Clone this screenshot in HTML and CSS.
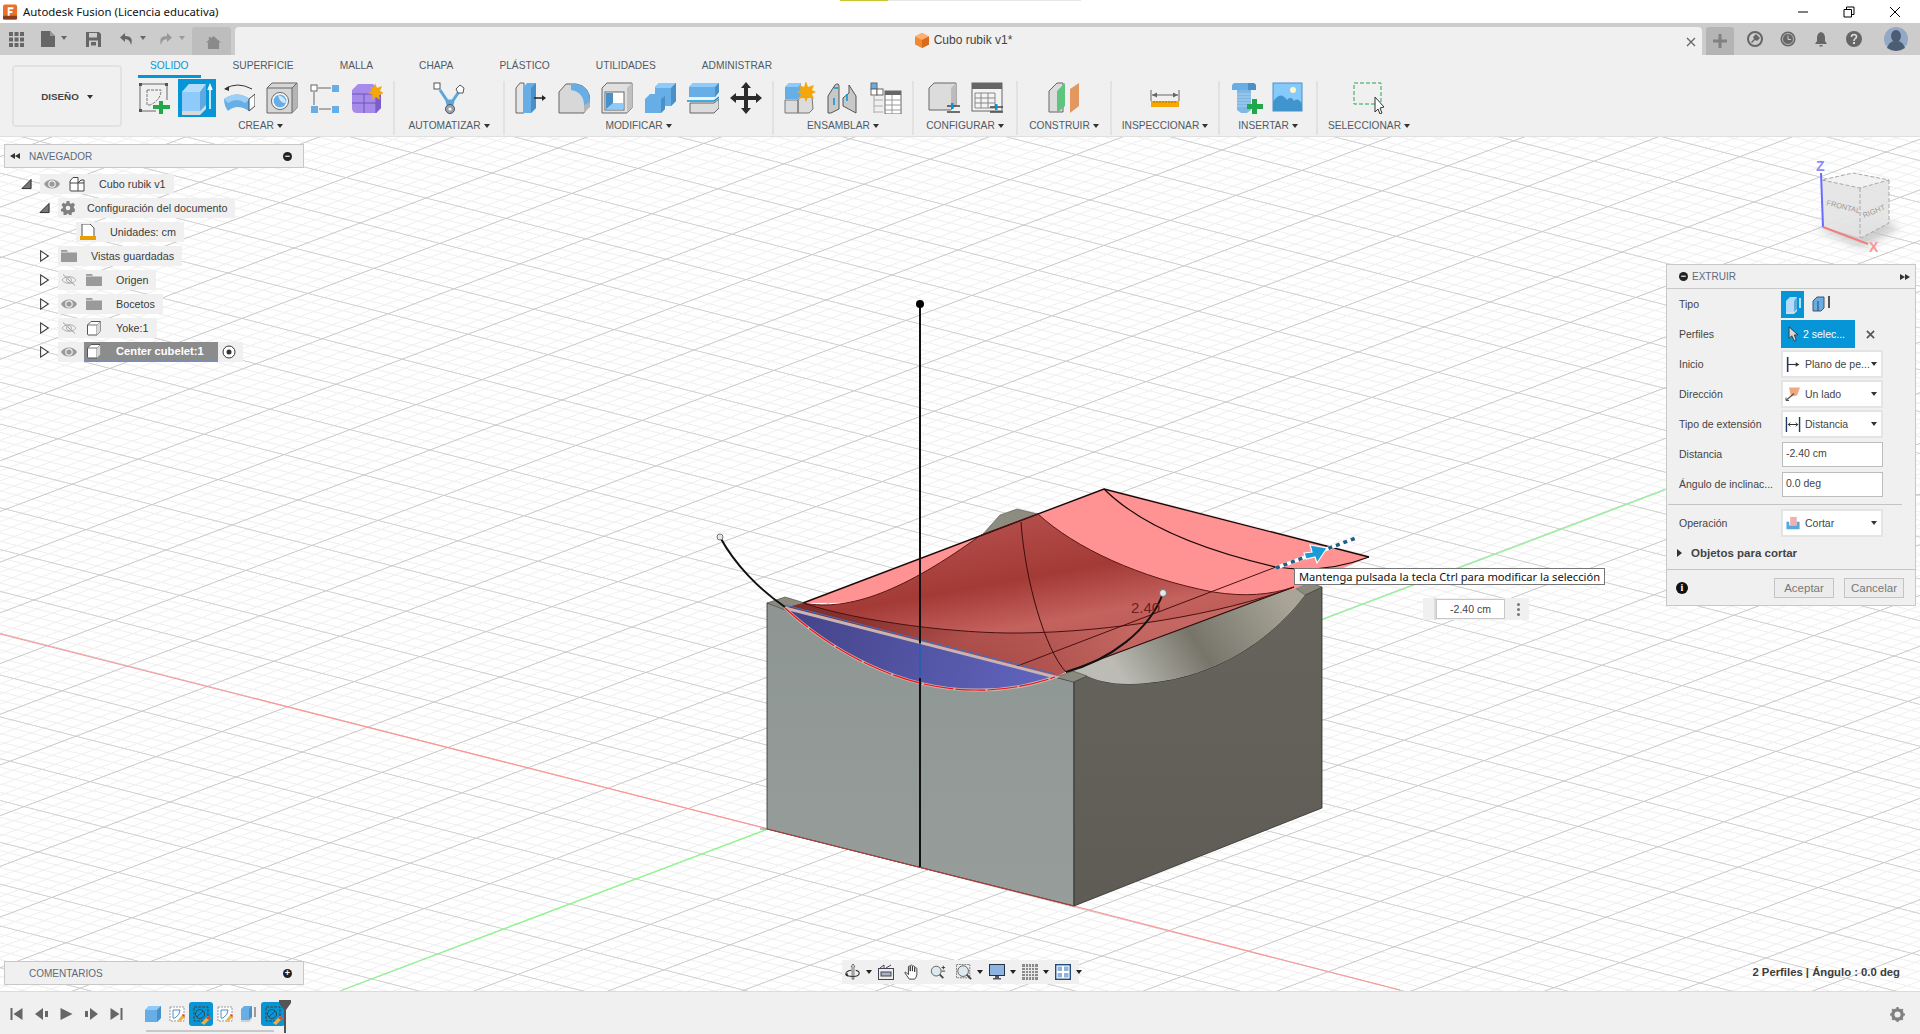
FILE: index.html
```html
<!DOCTYPE html>
<html lang="es">
<head>
<meta charset="utf-8">
<title>Autodesk Fusion</title>
<link rel="stylesheet" href="styles.css">
</head>
<body>
<svg class="defs" width="0" height="0">
  <defs>
    <symbol id="eye" viewBox="0 0 16 12"><path d="M0 6C3 0 13 0 16 6C13 12 3 12 0 6Z" fill="#9a9a9a"/><circle cx="8" cy="6" r="3.800" fill="#f0f0f0"/><circle cx="8" cy="6" r="2.600" fill="#9a9a9a"/></symbol>
    <symbol id="eyeoff" viewBox="0 0 16 12"><path d="M1 6C4 1.500 12 1.500 15 6C12 10.500 4 10.500 1 6Z" fill="none" stroke="#b0b0b0"/><circle cx="8" cy="6" r="2.500" fill="none" stroke="#b0b0b0"/><path d="M2 .5L14 11.500" stroke="#a0a0a0"/></symbol>
    <symbol id="folder" viewBox="0 0 16 12"><path d="M0 0H6L7 2H16V12H0Z" fill="#9a9a9a"/><path d="M0 2.200H16" stroke="#f0f0f0" stroke-width=".7"/></symbol>
    <symbol id="body" viewBox="0 0 16 16"><path d="M1.500 5L5 1.500H14.500V11.500L11 15H2.500Q1.500 15 1.500 14Z" fill="#fff" stroke="#555"/><path d="M11 5V15M1.500 5H11L14.500 1.500" fill="none" stroke="#777"/><path d="M11 5L14.500 1.500V11.500L11 15Z" fill="#d8d8d8"/></symbol>
    <symbol id="comp" viewBox="0 0 16 16"><path d="M1 5L4 1.500H9V7H15V15H2Q1 15 1 14Z" fill="#fff" stroke="#444"/><path d="M1 7H9V15M9 7L12 4H15V7" fill="none" stroke="#444"/></symbol>
    <symbol id="twr" viewBox="0 0 11 14"><path d="M1 1L10 7L1 13Z" fill="#fff" stroke="#333" stroke-width="1.200"/></symbol>
    <symbol id="twd" viewBox="0 0 12 12"><path d="M11 1V11H1Z" fill="#777" stroke="#222"/></symbol>
    <symbol id="skt" viewBox="0 0 16 16"><rect x="1" y="1" width="14" height="14" fill="#fff" stroke="#999" stroke-dasharray="2 1"/><path d="M4 4V12H6M4 4H11Q11 9 6 12" fill="none" stroke="#4a90c8"/><path d="M9 14L14 8L16 10L11 16Z" fill="#f0b040"/><path d="M14 8L16 10L15 11L13 9Z" fill="#e04040"/></symbol>
    <symbol id="skb" viewBox="0 0 24 24"><rect width="24" height="24" rx="3" fill="#0696d7"/><rect x="5" y="5" width="14" height="14" fill="none" stroke="#444" stroke-dasharray="3 1"/><circle cx="11" cy="12" r="4.500" fill="none" stroke="#444"/><path d="M8 15L14 9" stroke="#444"/><path d="M12 21L19 14L22 16L15 23Z" fill="#f0b040"/><path d="M19 14L22 16L20 18L17 16Z" fill="#e04040"/></symbol>
  </defs>
</svg>

<div class="app">
  <header class="titlebar">
    <svg class="app-logo" viewBox="0 0 16 16"><rect width="15" height="16" rx="2" fill="#e8702a"/><rect y="12" width="15" height="4" rx="1" fill="#8a3c18"/><path d="M5 3H11V5H7V7H10V9H7V12H5Z" fill="#fff"/></svg>
    <span class="app-title">Autodesk Fusion (Licencia educativa)</span>
    <span class="progress"></span>
    <div class="winctl">
      <svg viewBox="0 0 12 12"><path d="M1 6H11" stroke="#000"/></svg>
      <svg viewBox="0 0 12 12"><path d="M3.500 3V1H11V8.500H9M1 3.500H8.500V11H1Z" fill="none" stroke="#000"/></svg>
      <svg viewBox="0 0 12 12"><path d="M1 1L11 11M11 1L1 11" stroke="#000"/></svg>
    </div>
  </header>

  <div class="tabstrip">
    <svg class="qa qa-grid" viewBox="0 0 15 15"><path fill="#666" d="M0 0h4v4H0zM5.500 0h4v4h-4zM11 0h4v4h-4zM0 5.500h4v4H0zM5.500 5.500h4v4h-4zM11 5.500h4v4h-4zM0 11h4v4H0zM5.500 11h4v4h-4zM11 11h4v4h-4z"/></svg>
    <svg class="qa qa-file" viewBox="0 0 14 16"><path fill="#666" d="M0 0H9L14 5V16H0Z"/><path fill="#999" d="M9 0V5H14Z"/></svg>
    <span class="caret caret-qa"></span>
    <svg class="qa qa-save" viewBox="0 0 15 15"><path fill="#666" d="M0 0H13L15 2V15H0Z"/><rect x="3" y="1" width="8" height="4.500" fill="#ccc"/><rect x="3" y="8.500" width="9" height="6.500" fill="#ccc"/><rect x="5" y="10" width="5" height="3.500" fill="#666"/></svg>
    <svg class="qa qa-undo" viewBox="0 0 15 14"><path d="M6 1L1 5.500L6 10V7Q11 7 12 13Q15 4 6 4Z" fill="#666"/></svg>
    <span class="caret caret-qa"></span>
    <svg class="qa qa-redo" viewBox="0 0 15 14"><path d="M9 1L14 5.500L9 10V7Q4 7 3 13Q0 4 9 4Z" fill="#999"/></svg>
    <span class="caret caret-qa caret-dim"></span>
    <div class="hometab"><svg viewBox="0 0 16 14"><path d="M8 0L16 7H14V14H2V7H0L3 4.400V1H5V2.700Z" fill="#8a8a8a"/></svg></div>
    <div class="doctab">
      <svg class="doc-cube" viewBox="0 0 14 15"><path d="M7 0L14 3.500V11.500L7 15L0 11.500V3.500Z" fill="#f08a30"/><path d="M7 0L14 3.500L7 7L0 3.500Z" fill="#ffb070"/><path d="M7 7L14 3.500V11.500L7 15Z" fill="#d86c18"/></svg>
      <span class="doc-name">Cubo rubik v1*</span>
      <svg class="doc-close" viewBox="0 0 10 10"><path d="M1 1L9 9M9 1L1 9" stroke="#666" stroke-width="1.300"/></svg>
    </div>
    <div class="plustab"><svg viewBox="0 0 14 14"><path d="M5.500 0h3v5.500H14v3H8.500V14h-3V8.500H0v-3h5.500z" fill="#808080"/></svg></div>
    <div class="statusicons">
      <svg viewBox="0 0 16 16"><circle cx="8" cy="8" r="7" fill="none" stroke="#666" stroke-width="2"/><path d="M4 11L7 8L6 6L9 3L13 7L10 10L8 9L5 12Z" fill="#666"/></svg>
      <svg viewBox="0 0 16 16"><circle cx="8" cy="8" r="7.500" fill="#666"/><circle cx="8" cy="8" r="5.500" fill="none" stroke="#ccc" stroke-width=".8"/><path d="M8 4.500V8.500H11" fill="none" stroke="#ccc"/></svg>
      <svg viewBox="0 0 16 16"><path d="M8 1Q12 2 12 7V10L14 13H2L4 10V7Q4 2 8 1Z" fill="#666"/><rect x="6.500" y="14" width="3" height="1.500" fill="#666"/></svg>
      <svg viewBox="0 0 16 16"><circle cx="8" cy="8" r="8" fill="#666"/><path d="M5.500 6Q5.500 3.500 8 3.500Q10.500 3.500 10.500 5.800Q10.500 7 9 7.800Q8 8.500 8 10" fill="none" stroke="#ddd" stroke-width="1.600"/><rect x="7" y="11" width="2" height="2" fill="#ddd"/></svg>
      <svg class="avatar" viewBox="0 0 24 24"><circle cx="12" cy="12" r="12" fill="#93a8c4"/><ellipse cx="12" cy="9" rx="5" ry="6" fill="#4c5c72"/><path d="M3 21Q5 15 10 14H14Q19 15 21 21Q12 27 3 21Z" fill="#4c5c72"/></svg>
    </div>
  </div>

  <div class="toolbar">
    <button class="design">DISEÑO<span class="caret caret-design"></span></button>
    <div class="ribbon">
      <nav class="tabs">
        <span class="tab tab-on">SOLIDO</span>
        <span class="tab">SUPERFICIE</span>
        <span class="tab">MALLA</span>
        <span class="tab">CHAPA</span>
        <span class="tab">PLÁSTICO</span>
        <span class="tab">UTILIDADES</span>
        <span class="tab">ADMINISTRAR</span>
      </nav>
      <div class="groups">
        <section class="group">
          <div class="icons icons-crear">
            <svg class="ic" viewBox="0 0 32 32"><path d="M3 2H28M2 3V28M3 29H18M29 3V18" stroke="#666" fill="none"/><path fill="#555" d="M1 1h3v3H1zM27 1h3v3h-3zM1 27h3v3H1z"/><path d="M9 8V23H12M9 8H23Q23 18 12 23" fill="none" stroke="#777" stroke-dasharray="3 1"/><path d="M21 19h4v4h7v4h-7v5h-4v-5h-6v-4h6z" fill="#22a84a"/></svg>
            <div class="ic-active"><svg viewBox="0 0 38 38"><path d="M4 13L11 5H28V26L22 32H4Z" fill="#8ecbfb"/><path d="M4 13L11 5H28L22 13Z" fill="#b3dcfb"/><path d="M22 13L28 5V26L22 32Z" fill="#5ea9e0"/><path d="M4 32H22L28 26V30L22 36H4Z" fill="#d8d8d8"/><path d="M32 30V8M30 11L32 6L34 11" stroke="#fff" stroke-width="1.500" fill="#fff"/></svg></div>
            <svg class="ic ic-rev" viewBox="0 0 32 32"><path d="M2 7Q14 -1 29 7" fill="none" stroke="#333"/><path d="M1 7L6 4V9Z" fill="#333"/><path d="M1 17Q14 8 27 17L26 29Q14 21 5 29Q1 24 1 17Z" fill="#68aee6"/><path d="M1 17Q14 8 27 17L22 21Q14 15 5 21Z" fill="#9ccff5"/><path d="M26 17L32 12V24L26 29Z" fill="#fff" stroke="#444"/></svg>
            <svg class="ic ic-hole" viewBox="0 0 32 32"><path d="M1 6L6 1H31V26L26 31H1Z" fill="#d6d6d6" stroke="#666"/><path d="M26 6L31 1V26L26 31Z" fill="#b5b5b5"/><path d="M1 6H26V31M26 6L31 1" fill="none" stroke="#666"/><circle cx="14" cy="19" r="8.500" fill="#fff" stroke="#666"/><circle cx="14" cy="19" r="6.500" fill="#68aee6"/><path d="M12 13Q20 15 20 21Q14 22 12 13Z" fill="#cfe6f8"/></svg>
            <svg class="ic ic-pat" viewBox="0 0 32 32"><rect x="3" y="3" width="6" height="6" fill="#fff" stroke="#666"/><path fill="#68aee6" d="M24 3h7v7h-7zM3 24h7v7H3zM24 24h7v7h-7z"/><path d="M10 6H23M6 10V23M11 27H23" stroke="#666"/></svg>
            <svg class="ic ic-star" viewBox="0 0 32 32"><path d="M1 8L7 2H22L30 10V26L25 31H6Q1 31 1 26Z" fill="#a78bea"/><path d="M1 12H25V31M13 12V31M1 21H25" fill="none" stroke="#6f52b8"/><path d="M25 16L30 12V26L25 31Z" fill="#7a5ecb"/><path d="M24 1L26 6L31 4L29 9L33 11L28 13L29 18L25 15L21 18L22 13L17 11L21 9L20 4L23 6Z" fill="#f5a70a"/></svg>
          </div>
          <span class="glabel">CREAR<span class="caret"></span></span>
        </section>
        <section class="group">
          <div class="icons">
            <svg class="ic" viewBox="0 0 32 32"><path d="M7 8L15 20M27 8L19 20M14 19H20L18 26H16Z" fill="#5aa6de" stroke="#5aa6de" stroke-width="3"/><rect x="1" y="1" width="6" height="6" fill="#fff" stroke="#555"/><path d="M27 3L31 6L30 11L25 11L23 7Z" fill="#fff" stroke="#555"/><circle cx="17" cy="27" r="4.500" fill="#9ba4ac" stroke="#555"/><circle cx="17" cy="27" r="1.500" fill="#fff"/></svg>
          </div>
          <span class="glabel">AUTOMATIZAR<span class="caret"></span></span>
        </section>
        <section class="group">
          <div class="icons">
            <svg class="ic" viewBox="0 0 32 32"><path d="M1 6L5 1H9V31H1Z" fill="#e6e6e6" stroke="#666"/><path d="M8 6L12 1H21V26L16 31H8Z" fill="#68aee6"/><path d="M16 6L21 1V26L16 31Z" fill="#4a90c8"/><path d="M19 16H29" stroke="#222" stroke-width="1.500"/><path d="M27 13L31 16L27 19Z" fill="#222"/></svg>
            <svg class="ic" viewBox="0 0 32 32"><path d="M1 10L8 2H18Q32 4 32 20L26 31H1Z" fill="#d8d8d8" stroke="#666"/><path d="M13 2H18Q32 4 32 20L26 24Q26 10 13 8Z" fill="#68aee6"/><path d="M26 24L32 20V25L26 31Z" fill="#b5b5b5"/></svg>
            <svg class="ic" viewBox="0 0 32 32"><path d="M1 6L6 1H31V26L26 31H1Z" fill="#e0e0e0" stroke="#666"/><path d="M26 6L31 1V26L26 31Z" fill="#c0c0c0"/><rect x="4" y="10" width="19" height="18" fill="#fff" stroke="#666"/><path d="M5 11H12V21H22V27H5Z" fill="#4a90c8"/><path d="M12 21H22V27H5Z" fill="#8ecbfb"/></svg>
            <svg class="ic" viewBox="0 0 32 32"><path d="M1 17L6 12H11V5L15 1H32V19L27 24H21V27L17 31H1Z" fill="#68aee6"/><path d="M15 1H32L27 6H11Z" fill="#8ecbfb"/><path d="M27 6L32 1V19L27 24ZM17 17L21 14V27L17 31Z" fill="#4a90c8"/></svg>
            <svg class="ic" viewBox="0 0 32 32"><path d="M2 5L6 1H32V10L28 15H2Z" fill="#68aee6"/><path d="M2 5L6 1H32L28 5Z" fill="#8ecbfb"/><path d="M28 5L32 1V10L28 15Z" fill="#4a90c8"/><path d="M0 19H27L32 15" fill="none" stroke="#0696d7" stroke-width="1.500"/><path d="M3 21H27L32 17V26L27 31H3Z" fill="#dcdcdc" stroke="#666"/></svg>
            <svg class="ic" viewBox="0 0 32 32"><path d="M16 0L21 6H18V14H26V11L32 16L26 21V18H18V26H21L16 32L11 26H14V18H6V21L0 16L6 11V14H14V6H11Z" fill="#2b2b2b"/></svg>
          </div>
          <span class="glabel">MODIFICAR<span class="caret"></span></span>
        </section>
        <section class="group">
          <div class="icons">
            <svg class="ic" viewBox="0 0 32 32"><path d="M1 5L5 1H17V14L14 17H1Z" fill="#68aee6"/><path d="M1 5L5 1H17L14 5Z" fill="#8ecbfb"/><path d="M1 18H14V31H1ZM14 18L17 15H28L29 27L25 31H14Z" fill="#dcdcdc" stroke="#777"/><path d="M22 -1L24 5L30 3L28 8L32 10L28 12L30 17L24 15L22 20L20 15L15 17L17 12L13 10L17 8L15 3L20 5Z" fill="#f5a70a"/></svg>
            <svg class="ic" viewBox="0 0 32 32"><path d="M1 14L8 3Q12 0 12 5V27L4 31H1Z" fill="#c8c8c8" stroke="#555"/><path d="M16 16L22 11V3L29 14V31L16 24Z" fill="#c8c8c8" stroke="#555"/><path d="M7 6H11M7 16V23M20 12V19" stroke="#0696d7" stroke-width="1.500"/></svg>
            <svg class="ic" viewBox="0 0 32 32"><rect x="1" y="1" width="6" height="6" fill="#68aee6" stroke="#666"/><rect x="1" y="7" width="6" height="6" fill="#fff" stroke="#666"/><rect x="7" y="7" width="6" height="6" fill="#fff" stroke="#666"/><path d="M4 13V31M4 18H13M4 24H13M4 30H13" stroke="#aaa"/><rect x="15" y="9" width="16" height="23" fill="#fff" stroke="#666"/><rect x="15" y="9" width="16" height="4" fill="#666"/><path d="M15 18H31M15 23H31M15 28H31M22 13V32" stroke="#999"/></svg>
          </div>
          <span class="glabel">ENSAMBLAR<span class="caret"></span></span>
        </section>
        <section class="group">
          <div class="icons">
            <svg class="ic" viewBox="0 0 32 32"><path d="M1 6L6 1H28V23L23 28H1Z" fill="#dcdcdc" stroke="#666"/><path d="M23 6L28 1V23L23 28Z" fill="#bcbcbc"/><path d="M19 24H32M19 30H32" stroke="#444" stroke-width="1.500"/><path d="M23 21h2.500v6H23z" fill="#0696d7"/></svg>
            <svg class="ic" viewBox="0 0 32 32"><rect x="1" y="1" width="30" height="28" fill="#f4f4f4" stroke="#666"/><rect x="1" y="1" width="30" height="6" fill="#666"/><path d="M4 11H24V26H4ZM4 16H24M4 21H24M10 11V26M17 11V26" fill="none" stroke="#888"/><path d="M19 25H32M19 30H32" stroke="#444" stroke-width="1.500"/><path d="M24 22h2.500v6H24z" fill="#0696d7"/></svg>
          </div>
          <span class="glabel">CONFIGURAR<span class="caret"></span></span>
        </section>
        <section class="group">
          <div class="icons">
            <svg class="ic" viewBox="0 0 32 32"><path d="M1 9L9 1H15V30H1Z" fill="#dcdcdc" stroke="#666"/><path d="M9 9L17 1V24L9 31Z" fill="#5ec47e"/><path d="M22 7L31 1V24L22 31Z" fill="#e2985e"/></svg>
          </div>
          <span class="glabel">CONSTRUIR<span class="caret"></span></span>
        </section>
        <section class="group">
          <div class="icons">
            <svg class="ic" viewBox="0 0 32 32"><path d="M2 8V19M30 8V19M3 13H29" stroke="#666"/><path d="M3 13L8 10.500V15.500ZM29 13L24 10.500V15.500Z" fill="#666"/><rect x="2" y="19" width="28" height="6" fill="#f7a800"/><path d="M5 19v2M8 19v2M11 19v2M14 19v2M17 19v2M20 19v2M23 19v2M26 19v2" stroke="#a67000"/></svg>
          </div>
          <span class="glabel">INSPECCIONAR<span class="caret"></span></span>
        </section>
        <section class="group">
          <div class="icons icons-insert">
            <svg class="ic" viewBox="0 0 32 32"><path d="M0 3L2 1H22L24 3V8H0Z" fill="#68aee6"/><path d="M16 1H22L24 3V8H16Z" fill="#4a90c8"/><path d="M5 8H19V28L15 31H9L5 28Z" fill="#7fb8e4"/><path d="M5 12H19M5 15H19M5 18H19M5 21H19M5 24H19" stroke="#a8d0ee"/><path d="M20 17h5v5h6v5h-6v5h-5v-5h-5v-5h5z" fill="#22a84a"/></svg>
            <svg class="ic" viewBox="0 0 32 32"><rect x="1" y="1" width="29" height="28" fill="#86c9fb" stroke="#4a90c8"/><circle cx="21" cy="8" r="3" fill="#fff6c8"/><path d="M1 29V20Q8 8 15 18Q19 13 22 19Q26 15 30 22V29Z" fill="#4095cf"/></svg>
          </div>
          <span class="glabel">INSERTAR<span class="caret"></span></span>
        </section>
        <section class="group group-last">
          <div class="icons">
            <svg class="ic" viewBox="0 0 32 32"><rect x="1" y="1" width="27" height="21" fill="none" stroke="#22a84a" stroke-dasharray="4 2"/><path d="M22 15V30L25 27L27 32L29 31L27 26L31 25Z" fill="#fff" stroke="#333"/></svg>
          </div>
          <span class="glabel">SELECCIONAR<span class="caret"></span></span>
        </section>
      </div>
    </div>
  </div>

  <main class="canvas">
    <svg class="scene" viewBox="0 137 1920 854" width="1920" height="854">
      <defs>
        <pattern id="grid" patternUnits="userSpaceOnUse" width="100" height="100" patternTransform="matrix(.8 .204 .66 -.25 768 829)">
          <path d="M20 0V100M40 0V100M60 0V100M80 0V100" stroke="#efefef" stroke-width="2"/>
          <path d="M0 20H100M0 40H100M0 60H100M0 80H100" stroke="#efefef" stroke-width="2.400"/>
          <path d="M0 0V100M100 0V100" stroke="#c9c9c9" stroke-width="2"/>
          <path d="M0 0H100M0 100H100" stroke="#c9c9c9" stroke-width="2.400"/>
        </pattern>
        <linearGradient id="gLeft" x1="0" y1="0" x2="0" y2="1"><stop offset="0" stop-color="#8e9694"/><stop offset="1" stop-color="#969d9b"/></linearGradient>
        <linearGradient id="gRight" x1="0" y1="0" x2="0" y2="1"><stop offset="0" stop-color="#66645c"/><stop offset="1" stop-color="#5e5c55"/></linearGradient>
        <linearGradient id="gSaddle" gradientUnits="userSpaceOnUse" x1="1130" y1="690" x2="1280" y2="590"><stop offset="0" stop-color="#bcbcb5"/><stop offset=".45" stop-color="#77756a"/><stop offset="1" stop-color="#a8a598"/></linearGradient>
        <linearGradient id="gDark" gradientUnits="userSpaceOnUse" x1="1000" y1="514" x2="1030" y2="680"><stop offset="0" stop-color="#b5504c"/><stop offset=".4" stop-color="#a33a36"/><stop offset=".68" stop-color="#c4625e"/><stop offset="1" stop-color="#b45450"/></linearGradient>
        <linearGradient id="gFront" gradientUnits="userSpaceOnUse" x1="803" y1="610" x2="1130" y2="640"><stop offset="0" stop-color="#7d2f2c"/><stop offset=".5" stop-color="#8c3430" stop-opacity=".4"/><stop offset="1" stop-color="#c96e68" stop-opacity=".6"/></linearGradient>
        <linearGradient id="gBlue" gradientUnits="userSpaceOnUse" x1="800" y1="610" x2="1050" y2="690"><stop offset="0" stop-color="#45448a"/><stop offset="1" stop-color="#6165bf"/></linearGradient>
      </defs>
      <rect x="0" y="137" width="1920" height="854" fill="#fff"/>
      <rect x="0" y="137" width="1920" height="854" fill="url(#grid)"/>
      <path d="M0 634L768 829L1074 906L1400 990" stroke="#ff9494" stroke-width="1.200" fill="none"/>
      <path d="M342 990L768 829L1665 490" stroke="#90f890" stroke-width="1.200" fill="none"/>
      <path d="M760 829H768" stroke="#999" stroke-width="1.200"/>

      <path d="M982 535L1000 515L1017 509L1038 514L1021 522Z" fill="#8c8c80" stroke="#555" stroke-width=".6"/>
      <path d="M767 603L785 608L1055 677L1074 682V906L767 829Z" fill="url(#gLeft)" stroke="#2c2c2c" stroke-width=".8"/>
      <path d="M1074 682L1087 676C1105 684 1125 685 1146 683C1190 680 1255 660 1305 595L1322 587V808L1074 906Z" fill="url(#gRight)" stroke="#2c2c2c" stroke-width=".8"/>
      <path d="M767 829L1074 906" stroke="#b83a3a" stroke-width="1"/>
      <path d="M1066 672L1294 587L1305 595C1255 660 1190 680 1146 683C1125 685 1105 684 1087 676Z" fill="url(#gSaddle)"/>
      <path d="M767 603L785 597L805 603L785 610Z M1055 677L1073 671L1087 676L1073 682Z M1294 587L1309 582L1322 587L1305 595Z" fill="#8a8a7e" stroke="#444" stroke-width=".6"/>

      <path d="M803 603L1104 489L1369 557L1294 589L1213 602L1000 602Z" fill="#ff9292"/>
      <path d="M785 608L803 603C850 612 905 590 981 535L1038 514C1075 548 1140 578 1213 592C1245 597 1270 595 1294 587L1066 672L1055 677Z" fill="url(#gDark)"/>
      <path d="M785 608L803 603C860 622 960 634 1021 633C1110 632 1220 615 1294 587L1066 672L1055 677Z" fill="url(#gFront)"/>

      <path d="M803 603L1104 489L1369 557" fill="none" stroke="#1a0808" stroke-width="1.400"/>
      <path d="M1294 587L1066 672" stroke="#2a0c0c" stroke-width="1.200"/>
      <path d="M1104 489C1130 515 1180 545 1276 567C1310 572 1340 568 1369 557" fill="none" stroke="#1a0808" stroke-width="1.200"/>
      <path d="M803 603C860 622 960 634 1021 633C1110 632 1220 615 1294 587" fill="none" stroke="#4a1010" stroke-width="1"/>
      <path d="M803 603C850 612 905 590 981 535L1038 514C1075 548 1140 578 1213 592C1245 597 1270 595 1294 587" fill="none" stroke="#5a1616" stroke-width="1"/>
      <path d="M1021 522C1025 580 1045 650 1066 672" fill="none" stroke="#3c0c0c" stroke-width="1"/>
      <path d="M986 678L1276 567" stroke="#4a1010" stroke-width="1"/>

      <path d="M785 608L1055 677C1035 684 1005 691 975 690C900 690 830 650 785 608Z" fill="url(#gBlue)" stroke="#c8b4b4" stroke-width="3"/>
      <path d="M785 608C830 650 900 690 975 690C1005 691 1035 684 1055 677" fill="none" stroke="#f01010" stroke-width="1.200" stroke-dasharray="30 2"/>
      <path d="M785 605L1055 674" stroke="#3a6fd0" stroke-width="1"/>

      <path d="M920 304V867" stroke="#111" stroke-width="2"/>
      <path d="M920 643V678" stroke="#2a5fb0" stroke-width="2"/>
      <circle cx="920" cy="304" r="4" fill="#000"/>
      <path d="M720 537C735 565 760 590 785 607" fill="none" stroke="#111" stroke-width="2"/>
      <path d="M1066 672C1110 660 1150 630 1163 593" fill="none" stroke="#111" stroke-width="2"/>
      <circle cx="720" cy="537" r="3" fill="#e8e8e8" stroke="#777"/>
      <circle cx="1163" cy="593" r="3.500" fill="#e8e8e8" stroke="#777"/>
      <text class="dim" x="1131" y="613">2.40</text>

      <path d="M1276 568L1356 538" stroke="#fff" stroke-width="4"/>
      <path d="M1276 568L1356 538" stroke="#1f5f86" stroke-width="3.500" stroke-dasharray="4 4"/>
      <path d="M1304 553L1312 552L1310 545L1327 548L1317 563L1315 557L1306 559Z" fill="#1a9ad6" stroke="#fff" stroke-width="1.200"/>

      <g class="viewcube">
        <path class="vc-shadow" d="M1815 228L1862 248L1900 228L1880 218Z" fill="#b8b8b8"/>
        <path d="M1823 227L1861 238L1889 223L1889 180L1853 173L1822 180Z" fill="#e4e4e4" fill-opacity=".92"/>
        <path d="M1822 180L1853 173L1889 180L1860 188Z" fill="#f2f2f2"/>
        <path d="M1822 180L1860 188L1889 180L1853 173ZM1860 188V238M1889 180V223L1861 238" fill="none" stroke="#a8a8a8" stroke-dasharray="4 2"/>
        <text class="vc-t" transform="translate(1826 205) rotate(14)">FRONTAL</text>
        <text class="vc-t" transform="translate(1864 218) rotate(-22)">RIGHT</text>
        <path d="M1823 227L1821 173" stroke="#6a6aff" stroke-width="2"/>
        <path d="M1823 227L1868 244" stroke="#f08080" stroke-width="2"/>
        <text class="vc-z" x="1816" y="171">Z</text>
        <text class="vc-x" x="1869" y="252">X</text>
      </g>
    </svg>

    <aside class="dock dock-nav">
      <svg class="dock-arrows" viewBox="0 0 10 6"><path d="M5 0V6L0 3ZM10 0V6L5 3Z" fill="#333"/></svg>
      <span class="dock-title">NAVEGADOR</span>
      <span class="roundbtn">−</span>
    </aside>
    <div class="tree">
      <div class="row d0"><svg class="tw"><use href="#twd"/></svg><div class="chip"><svg class="vis"><use href="#eye"/></svg><svg class="obj"><use href="#comp"/></svg><span class="label">Cubo rubik v1</span></div></div>
      <div class="row d1"><svg class="tw"><use href="#twd"/></svg><div class="chip chip-tight"><svg class="gear" viewBox="0 0 16 16"><path d="M6.500 0h3l.5 2.500 1.500.7L14 2l2 2.500-1.500 2 .3 1.500L16 9.500l-.5 3-2.500.3-1 1.200.5 2.500h-3l-1-2H7l-1.500 2-3-1 .5-2.500-1-1L0 12l-.0-3 2-.8.300-1.500L.5 4.500 2.500 2l2.500 1.200 1-.7z" fill="#808080"/><circle cx="8" cy="8" r="2.600" fill="#f0f0f0"/></svg><span class="label">Configuración del documento</span></div></div>
      <div class="row d2"><div class="chip"><svg class="obj" viewBox="0 0 16 16"><path d="M2 0H10L14 4V13H2Z" fill="#fff" stroke="#555"/><rect y="12" width="16" height="4" fill="#e8a000"/></svg><span class="label">Unidades: cm</span></div></div>
      <div class="row d1"><svg class="tw"><use href="#twr"/></svg><div class="chip chip-tight"><svg class="obj obj-f"><use href="#folder"/></svg><span class="label">Vistas guardadas</span></div></div>
      <div class="row d1"><svg class="tw"><use href="#twr"/></svg><div class="chip chip-tight"><svg class="vis"><use href="#eyeoff"/></svg><svg class="obj obj-f"><use href="#folder"/></svg><span class="label">Origen</span></div></div>
      <div class="row d1"><svg class="tw"><use href="#twr"/></svg><div class="chip chip-tight"><svg class="vis"><use href="#eye"/></svg><svg class="obj obj-f"><use href="#folder"/></svg><span class="label">Bocetos</span></div></div>
      <div class="row d1"><svg class="tw"><use href="#twr"/></svg><div class="chip chip-tight"><svg class="vis"><use href="#eyeoff"/></svg><svg class="obj"><use href="#body"/></svg><span class="label">Yoke:1</span></div></div>
      <div class="row d1"><svg class="tw"><use href="#twr"/></svg><div class="chip chip-tight chip-sel"><svg class="vis"><use href="#eye"/></svg><span class="sel"><svg class="obj"><use href="#body"/></svg><span class="label label-sel">Center cubelet:1</span></span><svg class="radio" viewBox="0 0 14 14"><circle cx="7" cy="7" r="6" fill="#fff" stroke="#333"/><circle cx="7" cy="7" r="2.500" fill="#333"/></svg></div></div>
    </div>

    <aside class="dock dock-comments">
      <span class="dock-title dock-title-c">COMENTARIOS</span>
      <span class="roundbtn">+</span>
    </aside>

    <div class="navbar">
      <svg class="nb nb-orbit" viewBox="0 0 18 18"><path d="M9 0L11 3H10V17H8V3H7Z" fill="#fff" stroke="#333" stroke-width=".8"/><path d="M7 7Q1 8 1 11Q1 14 9 14Q16 14 16 10Q16 8 12 7" fill="none" stroke="#333" stroke-width="1.200"/><path d="M3 10L0 12L3 14Z" fill="#222"/></svg><span class="caret"></span>
      <svg class="nb" viewBox="0 0 16 16"><rect x="0.500" y="4.500" width="15" height="11" fill="#eee" stroke="#445"/><rect x="3" y="8" width="10" height="4" fill="#a9b4c2" stroke="#445"/><path d="M2 4L6 1V4M8 4L13 1" stroke="#445" fill="none"/></svg>
      <svg class="nb nb-far" viewBox="0 0 18 18"><path d="M6 17Q3 13 1 10Q1 8 3 10L5 12V3Q6 1 7 3V8V2Q8 0 9.500 2V8V3Q11 1 12 3V9V5Q13.500 3 14.500 5V12Q14 15 12 17Z" fill="#fff" stroke="#333"/></svg>
      <svg class="nb nb-far" viewBox="0 0 18 18"><circle cx="7" cy="8" r="5.500" fill="#dceaf0" stroke="#555"/><path d="M11 12L15 16" stroke="#444" stroke-width="2"/><path d="M13 4H17M15 2V6M13 8H17" stroke="#333"/></svg>
      <svg class="nb nb-far" viewBox="0 0 18 18"><rect x=".5" y=".5" width="15" height="15" fill="none" stroke="#666" stroke-dasharray="2 1"/><circle cx="8" cy="8" r="6" fill="#dceaf0" stroke="#555"/><path d="M12 12L17 17" stroke="#444" stroke-width="2"/></svg><span class="caret"></span>
      <svg class="nb" viewBox="0 0 16 16"><rect x=".5" y=".5" width="15" height="11" fill="#8db4e0" stroke="#234"/><path d="M6 12H10V14H12V15.500H4V14H6Z" fill="#556"/></svg><span class="caret"></span>
      <svg class="nb" viewBox="0 0 16 16"><rect width="16" height="16" fill="#8a8a8a"/><path d="M3.500 0V16M6.500 0V16M9.500 0V16M12.500 0V16M0 3.500H16M0 6.500H16M0 9.500H16M0 12.500H16" stroke="#e8e8e8"/></svg><span class="caret"></span>
      <svg class="nb" viewBox="0 0 16 16"><rect x=".7" y=".7" width="14.600" height="14.600" fill="#fff" stroke="#1f4a7a" stroke-width="1.400"/><path fill="#8db4e0" d="M2.500 2.500h4.500v4.500H2.500zM9 2.500h4.500v4.500H9zM2.500 9h4.500v4.500H2.500zM9 9h4.500v4.500H9z"/></svg><span class="caret"></span>
    </div>

    <div class="status">2 Perfiles | Ángulo : 0.0 deg</div>

    <div class="hint">Mantenga pulsada la tecla Ctrl para modificar la selección</div>

    <div class="valuebox"><span class="grip"></span><span class="valuein">-2.40 cm</span><span class="kebab"><i></i><i></i><i></i></span></div>

    <aside class="panel">
      <div class="panel-head">
        <span class="roundbtn roundbtn-s">−</span>
        <span class="panel-title">EXTRUIR</span>
        <svg class="panel-arrows" viewBox="0 0 10 6"><path d="M0 0V6L5 3ZM5 0V6L10 3Z" fill="#333"/></svg>
      </div>
      <div class="f-row"><span class="f-label">Tipo</span>
        <div class="f-ctl f-tipo">
          <span class="tipo-on"><svg viewBox="0 0 22 22"><path d="M4 8L8 4H15V16L12 19H4Z" fill="#b3dcfb"/><path d="M12 8L15 4V16L12 19Z" fill="#5ea9e0"/><path d="M4 19H12L15 16V18L12 21H4Z" fill="#dcdcdc"/><path d="M18 15V5" stroke="#fff" stroke-width="1.400"/></svg></span>
          <svg class="tipo-off" viewBox="0 0 20 20"><path d="M1 7L5 3H12V14L9 17H1Z" fill="#68aee6" stroke="#456"/><path d="M6 7V17" stroke="#345"/><path d="M17 14V2" stroke="#222" stroke-width="1.500"/></svg>
        </div>
      </div>
      <div class="f-row"><span class="f-label">Perfiles</span>
        <div class="f-ctl">
          <span class="pick"><svg viewBox="0 0 12 18"><path d="M1 1V14L4 11L7 17L9 16L7 10H11Z" fill="#d8d8d8" stroke="#333"/></svg>2 selec...</span>
          <svg class="pick-x" viewBox="0 0 10 10"><path d="M1 1L9 9M9 1L1 9" stroke="#555" stroke-width="1.800"/></svg>
        </div>
      </div>
      <div class="f-row"><span class="f-label">Inicio</span>
        <div class="f-ctl"><span class="drop"><svg viewBox="0 0 14 14"><path d="M2 0V14" stroke="#1e3a66" stroke-width="1.500"/><path d="M2 7H11" stroke="#333"/><path d="M9.500 5L13 7L9.500 9Z" fill="#333"/></svg><span class="drop-t">Plano de pe...</span><span class="caret caret-d"></span></span></div>
      </div>
      <div class="f-row"><span class="f-label">Dirección</span>
        <div class="f-ctl"><span class="drop"><svg viewBox="0 0 16 14"><path d="M4 0H15L12 8L6 9Z" fill="#f0a880"/><path d="M1 13L9 6" stroke="#555" stroke-width="1.200"/><path d="M1 13V10M1 13H4" stroke="#555"/></svg><span class="drop-t">Un lado</span><span class="caret caret-d"></span></span></div>
      </div>
      <div class="f-row"><span class="f-label">Tipo de extensión</span>
        <div class="f-ctl"><span class="drop"><svg viewBox="0 0 16 16"><path d="M1 0V16M15 0V16" stroke="#1e3a66" stroke-width="1.500"/><path d="M3 8H13M5 6L3 8L5 10M11 6L13 8L11 10" stroke="#222" fill="none"/></svg><span class="drop-t">Distancia</span><span class="caret caret-d"></span></span></div>
      </div>
      <div class="f-row"><span class="f-label">Distancia</span><div class="f-ctl"><span class="field">-2.40 cm</span></div></div>
      <div class="f-row"><span class="f-label">Ángulo de inclinac...</span><div class="f-ctl"><span class="field">0.0 deg</span></div></div>
      <hr class="rule">
      <div class="f-row"><span class="f-label">Operación</span>
        <div class="f-ctl"><span class="drop"><svg viewBox="0 0 16 16"><rect x="5" y="1" width="7" height="9" fill="#eeb0b0"/><path d="M1 6V14H15V6H12V10H4V6Z" fill="#5aa6de"/></svg><span class="drop-t">Cortar</span><span class="caret caret-d"></span></span></div>
      </div>
      <div class="expand"><span class="expand-tri"></span>Objetos para cortar</div>
      <div class="panel-foot">
        <span class="info">i</span>
        <span class="btn">Aceptar</span>
        <span class="btn">Cancelar</span>
      </div>
    </aside>
  </main>

  <footer class="timeline">
    <div class="transport">
      <svg viewBox="0 0 12 12"><path d="M0 0H2V12H0ZM12 0V12L3 6Z" fill="#666"/></svg>
      <svg viewBox="0 0 13 12"><path d="M8 0V12L0 6ZM10 3H13V9H10Z" fill="#666"/></svg>
      <svg viewBox="0 0 13 13"><path d="M0 0L13 6.500L0 13Z" fill="#666"/></svg>
      <svg viewBox="0 0 13 12"><path d="M5 0V12L13 6ZM0 3H3V9H0Z" fill="#666"/></svg>
      <svg viewBox="0 0 12 12"><path d="M0 0V12L9 6ZM10 0H12V12H10Z" fill="#666"/></svg>
    </div>
    <div class="steps">
      <span class="rail"></span>
      <span class="step"><svg class="st16" viewBox="0 0 16 16"><path d="M0 4L4 0H16V12L12 16H0Z" fill="#68aee6"/><path d="M0 4L4 0H16L12 4Z" fill="#8ecbfb"/><path d="M12 4L16 0V12L12 16Z" fill="#4a90c8"/></svg></span>
      <span class="step"><svg class="st16"><use href="#skt"/></svg></span>
      <span class="step"><svg class="st24"><use href="#skb"/></svg></span>
      <span class="step"><svg class="st16"><use href="#skt"/></svg></span>
      <span class="step"><svg class="st16" viewBox="0 0 16 16"><path d="M0 3L3 0H11V11L8 14H0Z" fill="#68aee6"/><path d="M8 3L11 0V11L8 14Z" fill="#4a90c8"/><path d="M0 14H8L11 11V13L8 16H0Z" fill="#cfcfcf"/><path d="M14 11V1" stroke="#444"/></svg></span>
      <span class="step"><svg class="st24"><use href="#skb"/></svg></span>
      <svg class="marker" viewBox="0 0 12 33"><path d="M0 0H12V3L7 10V33H5V10L0 3Z" fill="#555"/></svg>
    </div>
    <svg class="gear-s" viewBox="0 0 16 16"><circle cx="8" cy="8" r="5" fill="none" stroke="#808080" stroke-width="3.500"/><path d="M8 0V16M0 8H16M2.300 2.300L13.700 13.700M13.700 2.300L2.300 13.700" stroke="#808080" stroke-width="2.200" stroke-dasharray="3 10"/></svg>
  </footer>
</div>
</body>
</html>
```

FILE: styles.css
```css
* { box-sizing: border-box; }
html, body { margin: 0; height: 100%; overflow: hidden; }
body { font-family: "Liberation Sans", Arial, sans-serif; font-size: 10.5px; color: #3c3c3c; background: #fff; }
.defs { position: absolute; }
.app { display: flex; flex-direction: column; height: 100vh; width: 1920px; }

.caret { display: inline-block; width: 0; height: 0; border-left: 3.5px solid transparent; border-right: 3.5px solid transparent; border-top: 4px solid #333; margin-left: 3px; vertical-align: 1px; }

.titlebar { flex: 0 0 23px; height: 23px; background: #fff; display: flex; align-items: center; position: relative; }
.app-logo { width: 15px; height: 16px; margin-left: 3px; }
.app-title { margin-left: 5px; font-family: "Noto Sans", sans-serif; font-size: 11.4px; color: #111; }
.progress { position: absolute; left: 840px; top: 0; width: 241px; height: 1px; background: linear-gradient(90deg, #c8c832 48px, #e6e6e6 48px); }
.winctl { margin-left: auto; display: flex; gap: 34px; padding-right: 19px; }
.winctl svg { width: 12px; height: 12px; }

.tabstrip { flex: 0 0 32px; background: #cccccc; display: flex; align-items: flex-end; position: relative; }
.qa { align-self: center; margin-top: 0; }
.qa-grid { width: 15px; height: 15px; margin-left: 9px; }
.qa-file { width: 14px; height: 16px; margin-left: 17px; }
.qa-save { width: 15px; height: 15px; margin-left: 19px; }
.qa-undo { width: 15px; height: 14px; margin-left: 18px; }
.qa-redo { width: 15px; height: 14px; margin-left: 12px; }
.caret-qa { align-self: center; border-top-color: #666; margin-left: 6px; margin-bottom: 2px; border-left-width: 3.5px; border-right-width: 3.5px; }
.caret-dim { border-top-color: #999; }
.hometab { width: 39px; height: 28px; margin-left: 7px; padding-left: 4px; background: #bdbdbd; border-radius: 3px 3px 0 0; display: flex; align-items: center; justify-content: center; }
.hometab svg { width: 15px; height: 13px; margin-top: 3px; }
.doctab { width: 1467px; height: 28px; margin-left: 4px; background: #f0f0f0; border-radius: 4px 4px 0 0; display: flex; align-items: center; justify-content: center; position: relative; padding-right: 10px; padding-bottom: 2px; }
.doc-cube { width: 14px; height: 15px; margin-right: 5px; }
.doc-name { font-size: 12px; color: #444; }
.doc-close { position: absolute; right: 6px; top: 10px; width: 10px; height: 10px; }
.plustab { width: 28px; height: 28px; margin-left: 4px; background: #b4b4b4; border-radius: 3px 3px 0 0; display: flex; align-items: center; justify-content: center; }
.plustab svg { width: 14px; height: 14px; }
.statusicons { display: flex; align-items: center; height: 32px; padding-left: 13px; gap: 17px; }
.statusicons svg { width: 16px; height: 16px; }
.statusicons .avatar { width: 24px; height: 24px; margin-left: 5px; }

.toolbar { flex: 0 0 82px; background: #f0f0f0; border-bottom: 1px solid #e0e0e0; display: flex; }
.design { width: 110px; height: 62px; margin: 10px 0 0 12px; border: 2px solid #e2e2e2; border-radius: 4px; background: #f0f0f0; font: bold 9.8px "Liberation Sans", sans-serif; color: #444; padding: 0; }
.caret-design { margin-left: 8px; }
.ribbon { margin-left: 6px; width: 1292px; display: flex; flex-direction: column; }
.tabs { display: flex; height: 23px; gap: 22px; }
.tab { padding: 5px 12px 0 12px; font-size: 10.2px; color: #505a64; height: 23px; line-height: 12px; }
.tab-on { color: #0696d7; border-bottom: 3px solid #0696d7; margin-left: 10px; margin-right: -2px; height: 23px; padding-top: 5px; }
.groups { display: grid; grid-template-columns: 267px 110px 269px 140px 104px 94px 108px 98px 102px; height: 58px; }
.group { border-right: 2px solid #e2e2e2; display: flex; flex-direction: column; align-items: center; height: 54px; margin-top: 3px; }
.group-last { border-right: 0; }
.icons { display: flex; align-items: center; gap: 11px; height: 38px; flex: 0 0 38px; margin-top: -2px; }
.icons-crear { gap: 8px; }
.ic-rev { margin-left: -1px; }
.ic-hole { margin-left: 3px; }
.ic-pat { margin-left: 2px; }
.ic-star { margin-left: 3px; }
.icons-insert { gap: 8px; }
.ic { width: 32px; height: 32px; flex: none; }
.ic-active { width: 38px; height: 38px; background: #0696d7; flex: none; }
.ic-active svg { width: 38px; height: 38px; display: block; }
.glabel { font-size: 10.2px; color: #505a64; line-height: 16px; margin-top: 1px; white-space: nowrap; }

.canvas { flex: 1; position: relative; overflow: hidden; background: #fff; }
.scene { position: absolute; left: 0; top: 0; display: block; }
.dim { font: 15px "Liberation Sans", sans-serif; fill: #6e2020; }
.vc-shadow { filter: blur(5px); opacity: .7; }
.vc-t { font: 7.5px "Liberation Sans", sans-serif; fill: #9a9a9a; }
.vc-z { font: bold 14px "Liberation Sans", sans-serif; fill: #8c8cff; }
.vc-x { font: bold 14px "Liberation Sans", sans-serif; fill: #ff9494; }

.dock { position: absolute; left: 4px; width: 300px; height: 24px; background: #f0f0f0; border: 1px solid #c8c8c8; display: flex; align-items: center; }
.dock-nav { top: 7px; }
.dock-comments { top: 824px; }
.dock-arrows { width: 10px; height: 6px; margin-left: 5px; }
.dock-title { margin-left: 9px; font-size: 10px; color: #606a78; }
.dock-title-c { margin-left: 24px; }
.roundbtn { margin-left: auto; margin-right: 11px; width: 9px; height: 9px; border-radius: 50%; background: #222; color: #fff; font: bold 9px/9px "Liberation Sans", sans-serif; text-align: center; }
.roundbtn-s { margin: 0; flex: none; }

.tree { position: absolute; left: 0; top: 35px; }
.row { display: flex; align-items: center; height: 24px; }
.d0 { padding-left: 21px; }
.d1 { padding-left: 39px; }
.d2 { padding-left: 76px; }
.tw { width: 11px; height: 12px; margin-right: 8px; flex: none; }
.chip { height: 20px; background: #f0f0f0; display: flex; align-items: center; padding: 0 8px 0 4px; }
.chip-tight { padding-left: 3px; }
.vis { width: 16px; height: 12px; margin-right: 9px; flex: none; }
.obj { width: 16px; height: 16px; margin-right: 14px; flex: none; }
.obj-f { height: 12px; }
.gear { width: 14px; height: 14px; margin-right: 12px; flex: none; }
.label { font-size: 10.8px; color: #3c3c3c; white-space: nowrap; }
.sel { background: #8c8c8c; height: 20px; display: flex; align-items: center; padding: 0 10px 0 0; border-bottom: 2px dotted #6f8fc8; width: 134px; margin-left: -2px; padding-left: 2px; }
.label-sel { color: #fff; font-weight: bold; font-size: 11.2px; }
.radio { width: 14px; height: 14px; margin-left: 4px; flex: none; }
.chip-sel { padding-right: 7px; }

.navbar { position: absolute; left: 842px; top: 823px; width: 237px; height: 24px; background: #f0f0f0; display: flex; align-items: center; padding-left: 3px; gap: 6px; }
.navbar .caret { margin-left: -1px; border-top-color: #222; }
.nb { width: 16px; height: 16px; flex: none; }
.nb-far { margin-left: 4px; }

.status { position: absolute; right: 20px; top: 829px; font-weight: bold; font-size: 11.3px; color: #3c3c3c; }

.hint { position: absolute; left: 1294px; top: 431px; height: 17px; padding: 0 4px; background: #fff; border: 1px solid #767676; font: 11.15px/15px "Noto Sans", sans-serif; color: #111; white-space: nowrap; }

.valuebox { position: absolute; left: 1423px; top: 461px; width: 106px; height: 22px; background: #f0f0f0; display: flex; align-items: center; }
.grip { width: 13px; height: 100%; border-right: 2px solid #dcdcdc; margin-right: 0; }
.valuein { width: 69px; height: 20px; background: #fff; border: 1px solid #c8c8c8; text-align: center; font-size: 10.5px; line-height: 18px; color: #444; }
.kebab { display: flex; flex-direction: column; gap: 2px; margin-left: 12px; }
.kebab i { width: 3px; height: 3px; border-radius: 50%; background: #777; }

.panel { position: absolute; left: 1666px; top: 127px; width: 250px; height: 342px; background: #f0f0f0; border: 1px solid #c8c8c8; }
.panel-head { height: 24px; border-bottom: 1px solid #c8c8c8; display: flex; align-items: center; padding: 0 5px 0 12px; }
.panel-title { margin-left: 4px; font-size: 10px; color: #606a78; }
.panel-arrows { width: 10px; height: 6px; margin-left: auto; }
.f-row { display: flex; align-items: center; height: 30px; padding-left: 12px; }
.f-label { width: 102px; flex: none; white-space: nowrap; font-size: 10.5px; color: #444; }
.f-ctl { display: flex; align-items: center; }
.f-tipo { gap: 8px; }
.tipo-on { width: 23px; height: 27px; background: #0696d7; display: flex; align-items: center; justify-content: center; }
.tipo-on svg { width: 22px; height: 22px; }
.tipo-off { width: 20px; height: 20px; }
.pick { width: 74px; height: 28px; background: #0696d7; color: #fff; display: flex; align-items: center; padding-left: 7px; gap: 4px; }
.pick svg { width: 11px; height: 16px; }
.pick-x { width: 9px; height: 9px; margin-left: 11px; }
.drop { width: 102px; height: 28px; background: #fff; border: 2px solid #e4e4e4; display: flex; align-items: center; padding-left: 2px; }
.drop svg { width: 16px; height: 15px; flex: none; }
.drop-t { margin-left: 4px; color: #444; white-space: nowrap; }
.caret-d { margin-left: auto; margin-right: 4px; }
.field { width: 101px; height: 25px; background: #fff; border: 1px solid #bcbcbc; padding-left: 3px; line-height: 21px; color: #444; display: block; margin-left: 1px; }
.rule { margin: 5px 0 3px 1px; width: 234px; border: 0; border-top: 1px solid #c4c4c4; height: 0; }
.expand { height: 30px; display: flex; align-items: center; padding-left: 10px; font-size: 11.5px; font-weight: bold; color: #444; }
.expand-tri { width: 0; height: 0; border-top: 4px solid transparent; border-bottom: 4px solid transparent; border-left: 5px solid #333; margin-right: 9px; }
.panel-foot { border-top: 1px solid #c4c4c4; height: 36px; margin-top: 1px; display: flex; align-items: center; padding: 0 11px 0 9px; gap: 10px; }
.info { width: 12px; height: 12px; background: #111; color: #fff; border-radius: 50%; font: bold 10px/12px "Liberation Serif", serif; text-align: center; margin-right: auto; }
.btn { width: 60px; height: 20px; background: #ececec; border: 1px solid #c4c4c4; font-size: 11.5px; line-height: 18px; text-align: center; color: #777; }

.timeline { flex: 0 0 43px; background: #f0f0f0; border-top: 1px solid #dcdcdc; display: flex; align-items: flex-start; position: relative; }
.transport { display: flex; align-items: center; gap: 12px; padding: 16px 0 0 10px; }
.transport svg { width: 13px; height: 12px; }
.steps { display: flex; margin-left: 18px; margin-top: 10px; position: relative; height: 32px; }
.step { width: 24px; height: 24px; display: flex; align-items: center; justify-content: center; }
.st16 { width: 16px; height: 16px; }
.st24 { width: 24px; height: 24px; }
.rail { position: absolute; left: 5px; top: 28px; width: 128px; height: 2px; background: #c8c8c8; }
.marker { position: absolute; left: 138px; top: -2px; width: 12px; height: 33px; }
.gear-s { width: 15px; height: 15px; position: absolute; right: 15px; top: 15px; }
```
